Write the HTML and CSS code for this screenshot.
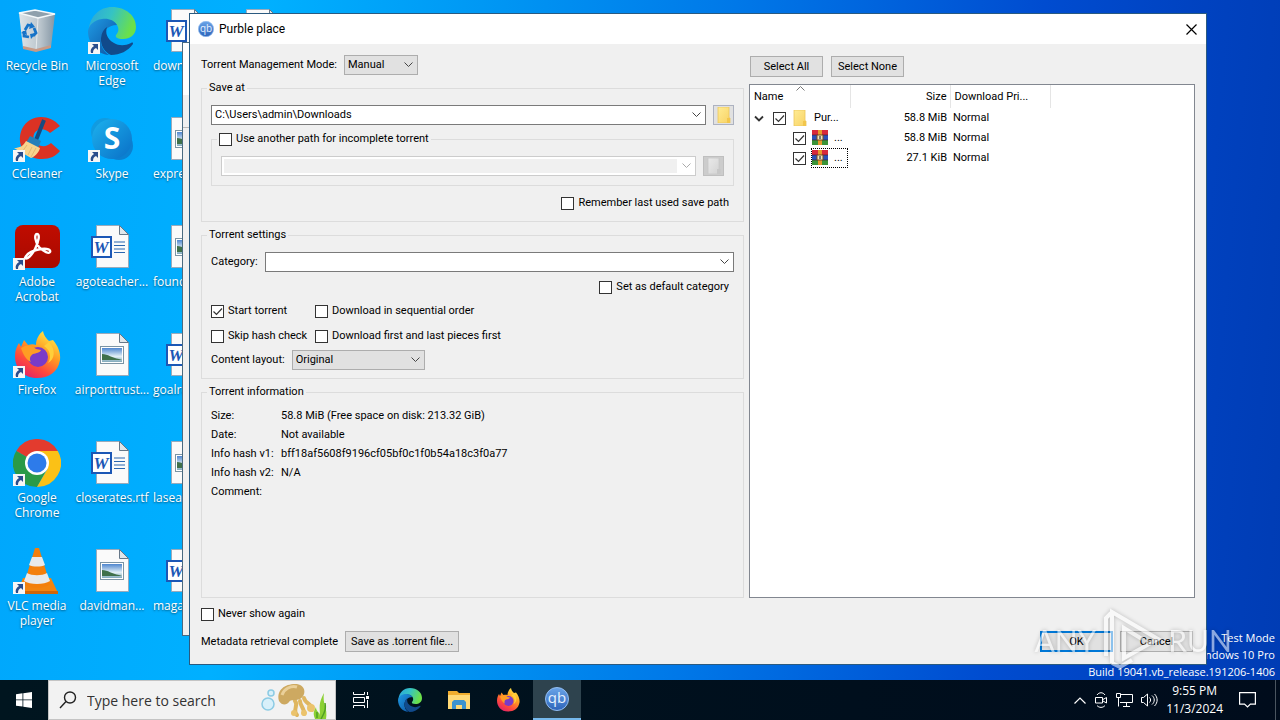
FILE: index.html
```html
<!DOCTYPE html>
<html lang="en">
<head>
<meta charset="utf-8">
<title>Purble place</title>
<link rel="stylesheet" href="styles.css">
</head>
<body>

<!-- shared icons -->
<svg class="sprite" aria-hidden="true">
  <defs>
    <linearGradient id="edge-top" x1="0" y1="0" x2="1" y2="0.3">
      <stop offset="0" stop-color="#2aa5dd"/><stop offset="0.5" stop-color="#35c3c4"/><stop offset="1" stop-color="#6be04a"/>
    </linearGradient>
    <linearGradient id="edge-low" x1="0" y1="0" x2="1" y2="1">
      <stop offset="0" stop-color="#1f9be4"/><stop offset="1" stop-color="#0c50a0"/>
    </linearGradient>
    <linearGradient id="fox" x1="0.8" y1="0" x2="0.2" y2="1">
      <stop offset="0" stop-color="#fff04a"/><stop offset="0.4" stop-color="#ff9a22"/><stop offset="0.7" stop-color="#ff4a3c"/><stop offset="1" stop-color="#e01e6c"/>
    </linearGradient>
    <linearGradient id="bin" x1="0" y1="0" x2="1" y2="0">
      <stop offset="0" stop-color="#dde4e8"/><stop offset="0.6" stop-color="#b9c4cc"/><stop offset="1" stop-color="#8496a4"/>
    </linearGradient>
    <linearGradient id="skype" x1="0" y1="0" x2="1" y2="1">
      <stop offset="0" stop-color="#1cb2ee"/><stop offset="1" stop-color="#0a6fc6"/>
    </linearGradient>
    <linearGradient id="photo" x1="0" y1="0" x2="0" y2="1">
      <stop offset="0" stop-color="#4f86cf"/><stop offset="0.6" stop-color="#e2f0f6"/><stop offset="1" stop-color="#7fa8ba"/>
    </linearGradient>
    <linearGradient id="qb" x1="0" y1="0" x2="0" y2="1">
      <stop offset="0" stop-color="#6aa4e8"/><stop offset="1" stop-color="#2d64ba"/>
    </linearGradient>
    <linearGradient id="folder" x1="0" y1="0" x2="1" y2="1">
      <stop offset="0" stop-color="#ffec94"/><stop offset="1" stop-color="#f8d264"/>
    </linearGradient>
    <linearGradient id="acrobat" x1="0" y1="0" x2="0" y2="1">
      <stop offset="0" stop-color="#c00c00"/><stop offset="1" stop-color="#a80a00"/>
    </linearGradient>
  </defs>

  <symbol id="i-shortcut" viewBox="0 0 12 12">
    <path d="M0 0h12v12H0z" fill="#f6f6f6"/>
    <path d="M4 2h6v6L8 6C6 7 5 8 5 11H3C2 8 3 6 6 4z" fill="#2a4d8c"/>
  </symbol>
  <symbol id="i-recycle" viewBox="0 0 48 48">
    <path d="M6 6l16-3 20 4-4 33-15 4-13-3z" fill="url(#bin)"/>
    <path d="M6 6l16-3 20 4-17 4z" fill="#8fa0ac" stroke="#f4f8fa" stroke-width="1.5"/>
    <path d="M25 11l-2 33" stroke="#fff" stroke-opacity=".6" fill="none"/>
    <path d="M10 39l13 3 15-4v3l-15 4-13-3z" fill="#c79a86"/>
    <path d="M12 23l3-5 5 1M21 21l2 5-3 3M16 30l-5-1v-5" fill="none" stroke="#1673c8" stroke-width="2.800"/>
    <path d="M18 15l4 5-6 2zM23 26l-5 6-1-5zM8 26l5-3 1 5z" fill="#1673c8"/>
  </symbol>
  <symbol id="i-edge" viewBox="0 0 48 48">
    <path d="M1 22C2 9 12 0 24 0c14 0 24 9 24 20 0 8-6 12-13 12-6 0-8-2-7-4 3-3 3-7 1-10C24 10 8 12 1 22z" fill="url(#edge-top)"/>
    <path d="M29 18c-3-5-9-7-15-6C6 13 1 18 0 24c0 13 9 23 21 24-6-4-8-9-8-15 0-8 7-15 16-15z" fill="url(#edge-low)"/>
    <path d="M19 20c-9 6-8 23 4 28 9 0 17-4 22-11 0-1 0-2-2-1-6 3-12 3-17 0-7-4-9-10-7-16z" fill="#114a8b"/>
  </symbol>
  <symbol id="i-ccleaner" viewBox="0 0 48 48">
    <path d="M47 11C36-2 16-1 9 14c-7 16 4 30 20 30 8 0 14-3 18-8l-9-8c-5 5-14 4-17-3-3-9 8-15 16-7z" fill="#db3224"/>
    <path d="M31 5l-8 20" stroke="#174b80" stroke-width="4"/>
    <path d="M17 21l11 5-3 7-12-5z" fill="#277fb9"/>
    <path d="M13 26l14 7c-1 5-6 9-9 10L1 33c6 0 9-2 12-7z" fill="#f8d38e"/>
    <path d="M14 30l-5 7M19 32l-4 8M23 33l-5 9" stroke="#e5b970"/>
  </symbol>
  <symbol id="i-skype" viewBox="0 0 48 48">
    <circle cx="17" cy="17" r="14" fill="#119be0"/>
    <circle cx="31" cy="31" r="14" fill="#0b80d0"/>
    <circle cx="24" cy="24" r="20" fill="url(#skype)"/>
  </symbol>
  <symbol id="i-acrobat" viewBox="0 0 48 48">
    <rect x="2" y="2" width="45" height="43" rx="8" fill="url(#acrobat)"/>
    <path d="M12 35c2-5 9-8 16-9 7-1 10 1 9 3s-6 0-11-5c-4-5-5-13-2-13s2 7-2 15c-3 6-8 11-10 9z" fill="none" stroke="#fff" stroke-width="2.400"/>
  </symbol>
  <symbol id="i-firefox" viewBox="0 0 48 48">
    <path d="M30 0c1 5 3 7 6 10l4-1c5 6 8 13 7 20-2 12-11 18-23 18C10 47 2 37 2 25c0-6 2-10 4-13l2 4 3-7 4 5c3-1 6-1 8 0 0-6 3-11 7-14z" fill="url(#fox)"/>
    <circle cx="25" cy="26" r="10" fill="#7a3bc8"/>
    <path d="M8 17c6-4 11-3 15 1l5 1c-1 3-5 3-8 4-3 2-4 5-2 8-5-2-8-8-10-14z" fill="#ff9d23"/>
    <path d="M31 15c6 4 8 11 4 17 7-4 8-13 1-21z" fill="#ffcf3a"/>
  </symbol>
  <symbol id="i-chrome" viewBox="0 0 48 48">
    <path d="M24 24L3.200 12a24 24 0 0 1 41.600 0z" fill="#e33b2e"/>
    <path d="M3.200 12a24 24 0 0 0 20.800 36l10-18-10-6z" fill="#2a9a48"/>
    <path d="M44.800 12a24 24 0 0 1-20.800 36l10.400-18L24 12z" fill="#fbc116"/>
    <circle cx="24" cy="24" r="12" fill="#fff"/>
    <circle cx="24" cy="24" r="9.500" fill="#2d7bea"/>
  </symbol>
  <symbol id="i-vlc" viewBox="0 0 48 48">
    <path d="M10 31h28l7 15H4z" fill="#f28410"/>
    <path d="M4 44h41v3H4z" fill="#cf6608"/>
    <path d="M22 1h4l11 36c-5 5-21 5-26 0z" fill="#f37f0c"/>
    <path d="M19 10h10l3 8c-4 2-12 2-16 0zM14 26c5 3 15 3 20 0l3 8c-6 4-20 4-26 0z" fill="#e9e9e9"/>
  </symbol>
  <symbol id="i-page" viewBox="0 0 48 48">
    <path d="M8.500 2.500h23l9 9v33h-32z" fill="#fafafa" stroke="#9ab"/>
    <path d="M31.500 2.500v9h9z" fill="#dfe6ea" stroke="#678"/>
  </symbol>
  <symbol id="i-word" viewBox="0 0 48 48">
    <use href="#i-page"/>
    <path d="M26 19h11M26 22.500h11M26 26h11M26 29.500h11" stroke="#2b66b0" stroke-width="1.200"/>
    <rect x="4" y="14" width="19" height="20" fill="#fff" stroke="#1c57b5" stroke-width="2"/>
  </symbol>
  <symbol id="i-image" viewBox="0 0 48 48">
    <use href="#i-page"/>
    <rect x="12.500" y="15.500" width="23" height="17" fill="#fff" stroke="#7b94a4"/>
    <path d="M14 17h20v14H14z" fill="url(#photo)"/>
    <path d="M14 23c6 0 10 4 17 5l3 1H14z" fill="#3f704a"/>
  </symbol>
  <symbol id="i-folder" viewBox="0 0 16 16">
    <path d="M2 0h11v11h1v5H2z" fill="url(#folder)" stroke="#ecc65c" stroke-width=".8"/>
    <path d="M11 11h3v5h-3z" fill="#f2c64c"/>
  </symbol>
  <symbol id="i-rar" viewBox="0 0 16 16">
    <path d="M0 0h16v5H0z" fill="#d8283c"/>
    <path d="M0 5h16v5H0z" fill="#2c50b8"/>
    <path d="M0 10h16v5H0z" fill="#3a9438"/>
    <path d="M0 5h16M0 10h16" stroke="#3a1830" stroke-width=".6"/>
    <path d="M6 0h4v15H6z" fill="#e79a2c"/>
    <path d="M5 5h6v5H5z" fill="#efe5c0" stroke="#7a4a20"/>
    <path d="M8 6v3" stroke="#555" stroke-width="1.500"/>
  </symbol>
</svg>

<main class="desktop">
  <div class="desktop-icons">
    <a class="shortcut" href="#"><svg class="icon"><use href="#i-recycle"/></svg><span>Recycle Bin</span></a>
    <a class="shortcut" href="#"><svg class="icon"><use href="#i-ccleaner"/><use href="#i-shortcut" y="35" width="12" height="12"/></svg><span>CCleaner</span></a>
    <a class="shortcut" href="#"><svg class="icon"><use href="#i-acrobat"/><use href="#i-shortcut" y="35" width="12" height="12"/></svg><span>Adobe Acrobat</span></a>
    <a class="shortcut" href="#"><svg class="icon"><use href="#i-firefox"/><use href="#i-shortcut" y="35" width="12" height="12"/></svg><span>Firefox</span></a>
    <a class="shortcut" href="#"><svg class="icon"><use href="#i-chrome"/><use href="#i-shortcut" y="35" width="12" height="12"/></svg><span>Google Chrome</span></a>
    <a class="shortcut" href="#"><svg class="icon"><use href="#i-vlc"/><use href="#i-shortcut" y="35" width="12" height="12"/></svg><span>VLC media player</span></a>

    <a class="shortcut" href="#"><svg class="icon"><use href="#i-edge"/><use href="#i-shortcut" y="35" width="12" height="12"/></svg><span>Microsoft Edge</span></a>
    <a class="shortcut" href="#"><svg class="icon"><use href="#i-skype"/><text x="24" y="34" text-anchor="middle" class="skype-s">S</text><use href="#i-shortcut" y="35" width="12" height="12"/></svg><span>Skype</span></a>
    <a class="shortcut" href="#"><svg class="icon"><use href="#i-word"/><text x="13" y="30" text-anchor="middle" class="word-w">W</text></svg><span>agoteacher...</span></a>
    <a class="shortcut" href="#"><svg class="icon"><use href="#i-image"/></svg><span>airporttrust...</span></a>
    <a class="shortcut" href="#"><svg class="icon"><use href="#i-word"/><text x="13" y="30" text-anchor="middle" class="word-w">W</text></svg><span>closerates.rtf</span></a>
    <a class="shortcut" href="#"><svg class="icon"><use href="#i-image"/></svg><span>davidman...</span></a>

    <a class="shortcut cut" href="#"><svg class="icon"><use href="#i-word"/><text x="13" y="30" text-anchor="middle" class="word-w">W</text></svg><span>down</span></a>
    <a class="shortcut cut" href="#"><svg class="icon"><use href="#i-image"/></svg><span>expre</span></a>
    <a class="shortcut cut" href="#"><svg class="icon"><use href="#i-image"/></svg><span>found</span></a>
    <a class="shortcut cut" href="#"><svg class="icon"><use href="#i-word"/><text x="13" y="30" text-anchor="middle" class="word-w">W</text></svg><span>goalre</span></a>
    <a class="shortcut cut" href="#"><svg class="icon"><use href="#i-image"/></svg><span>lasea</span></a>
    <a class="shortcut cut" href="#"><svg class="icon"><use href="#i-word"/><text x="13" y="30" text-anchor="middle" class="word-w">W</text></svg><span>maga</span></a>

    <a class="shortcut" href="#" aria-label="Document"><svg class="icon"><use href="#i-page"/></svg></a>
  </div>

  <p class="build">Test Mode<br>Windows 10 Pro<br>Build 19041.vb_release.191206-1406</p>

  <div class="back-window"><div class="back-title"></div><div class="back-tools"></div></div>

  <form class="dialog">
    <header class="titlebar">
      <svg width="16" height="16" viewBox="0 0 24 24"><circle cx="12" cy="12" r="11.500" fill="url(#qb)" stroke="#93bdf0"/><text x="12" y="16" text-anchor="middle" class="qb-text">qb</text></svg>
      <h1>Purble place</h1>
      <button type="button" class="close" aria-label="Close">
        <svg width="11" height="11" viewBox="0 0 11 11"><path d="M.5.5l10 10M10.500.5l-10 10" stroke="#000" stroke-width="1.200"/></svg>
      </button>
    </header>

    <div class="panes">
      <section class="options">
        <div class="row mode-row">
          <label for="mode">Torrent Management Mode:</label>
          <select id="mode" class="drop mode"><option>Manual</option></select>
        </div>

        <fieldset class="group">
          <legend>Save at</legend>
          <div class="row">
            <select class="drop editable grow" aria-label="Save path"><option>C:\Users\admin\Downloads</option></select>
            <button type="button" class="browse" aria-label="Browse"><svg width="16" height="16"><use href="#i-folder"/></svg></button>
          </div>
          <fieldset class="group inner">
            <legend><label class="check"><input type="checkbox">Use another path for incomplete torrent</label></legend>
            <div class="row">
              <select class="drop editable grow" aria-label="Incomplete path" disabled><option></option></select>
              <button type="button" class="browse" aria-label="Browse incomplete path" disabled><svg width="16" height="16"><use href="#i-folder"/></svg></button>
            </div>
          </fieldset>
          <label class="check push remember"><input type="checkbox">Remember last used save path</label>
        </fieldset>

        <fieldset class="group">
          <legend>Torrent settings</legend>
          <div class="row">
            <label for="category">Category:</label>
            <select id="category" class="drop editable grow"><option></option></select>
          </div>
          <label class="check push default"><input type="checkbox">Set as default category</label>
          <div class="checks">
            <label class="check"><input type="checkbox" checked>Start torrent</label>
            <label class="check"><input type="checkbox">Download in sequential order</label>
            <label class="check"><input type="checkbox">Skip hash check</label>
            <label class="check"><input type="checkbox">Download first and last pieces first</label>
          </div>
          <div class="row">
            <label for="layout">Content layout:</label>
            <select id="layout" class="drop layout"><option>Original</option></select>
          </div>
        </fieldset>

        <fieldset class="group info">
          <legend>Torrent information</legend>
          <dl>
            <dt>Size:</dt><dd>58.8 MiB (Free space on disk: 213.32 GiB)</dd>
            <dt>Date:</dt><dd>Not available</dd>
            <dt>Info hash v1:</dt><dd>bff18af5608f9196cf05bf0c1f0b54a18c3f0a77</dd>
            <dt>Info hash v2:</dt><dd>N/A</dd>
            <dt>Comment:</dt><dd></dd>
          </dl>
        </fieldset>
      </section>

      <section class="files">
        <div class="row file-buttons">
          <button type="button" class="btn">Select All</button>
          <button type="button" class="btn">Select None</button>
        </div>
        <div class="tree">
          <table>
            <thead>
              <tr>
                <th class="col-name">Name<svg class="sort" width="9" height="5" viewBox="0 0 9 5"><path d="M.5 4.500l4-4 4 4" fill="none" stroke="#777"/></svg></th>
                <th class="col-size">Size</th>
                <th class="col-priority">Download Pri...</th>
                <th></th>
              </tr>
            </thead>
            <tbody>
              <tr>
                <td><div class="file">
                  <svg width="10" height="7" viewBox="0 0 10 7"><path d="M1 1.500l4 4 4-4" fill="none" stroke="#333" stroke-width="1.800"/></svg>
                  <input type="checkbox" aria-label="Folder" checked>
                  <span class="file-name"><svg width="16" height="16"><use href="#i-folder"/></svg>Pur...</span>
                </div></td>
                <td class="size">58.8 MiB</td>
                <td>Normal</td>
                <td></td>
              </tr>
              <tr>
                <td><div class="file child">
                  <input type="checkbox" aria-label="First file" checked>
                  <span class="file-name"><svg width="16" height="16"><use href="#i-rar"/></svg>...</span>
                </div></td>
                <td class="size">58.8 MiB</td>
                <td>Normal</td>
                <td></td>
              </tr>
              <tr>
                <td><div class="file child">
                  <input type="checkbox" aria-label="Second file" checked>
                  <span class="file-name focused"><svg width="16" height="16"><use href="#i-rar"/></svg>...</span>
                </div></td>
                <td class="size">27.1 KiB</td>
                <td>Normal</td>
                <td></td>
              </tr>
            </tbody>
          </table>
        </div>
      </section>
    </div>

    <footer class="footer">
      <label class="check"><input type="checkbox">Never show again</label>
      <div class="row">
        <span>Metadata retrieval complete</span>
        <button type="button" class="btn save">Save as .torrent file...</button>
        <button type="button" class="btn ok">OK</button>
        <button type="button" class="btn">Cancel</button>
      </div>
    </footer>
  </form>

  <div class="watermark">
    <span>ANY</span>
    <svg width="60" height="64" viewBox="0 0 60 64"><path d="M4 48V10l5-5M10 55V4l46 27-34 19V20l18 11M10 55l8 4 12-7" fill="none" stroke="#fff" stroke-width="4"/></svg>
    <span>RUN</span>
  </div>
</main>

<nav class="taskbar">
  <button class="task start" aria-label="Start">
    <svg width="16" height="16" viewBox="0 0 16 16" fill="#fff"><path d="M0 2.200l6.500-.9v6.200H0zM7.300 1.200L16 0v7.500H7.300zM0 8.300h6.500v6.300L0 13.700zM7.300 8.300H16V16l-8.700-1.200z"/></svg>
  </button>
  <div class="search">
    <svg width="18" height="18" viewBox="0 0 18 18" fill="none" stroke="#222" stroke-width="1.400"><circle cx="11" cy="6.500" r="5.500"/><path d="M7 10.500L1 17"/></svg>
    <input type="text" placeholder="Type here to search" aria-label="Search">
    <svg width="74" height="38" viewBox="0 0 74 38">
      <circle cx="7" cy="23" r="6" fill="#d8f0fa" stroke="#8ccbe4" stroke-width="1.500"/>
      <circle cx="10" cy="12" r="3" fill="#d8f0fa" stroke="#8ccbe4" stroke-width="1.500"/>
      <g fill="none" stroke="#dfb660" stroke-width="4" stroke-linecap="round">
        <path d="M34 20c4 4-3 9 2 14M39 20c0 5 5 8 4 13M43 17c1 6 9 6 8 12"/>
      </g>
      <g fill="#ebc36c"><circle cx="33" cy="32" r="3"/><circle cx="43" cy="32" r="3"/><circle cx="50" cy="27" r="4"/></g>
      <path d="M18 20C15 9 24 3 34 3c11 0 12 11 5 15-5 2-9 0-11 3s-7 4-10-1z" fill="#cda961"/>
      <path d="M21 14c2-6 9-10 15-8" fill="none" stroke="#ead09a" stroke-width="3"/>
      <path d="M54 38c-3-7 0-9 1-12 0 5 4 5 4 9 0-9-2-12 4-23-2 11 4 15 2 26z" fill="#8bd034"/>
      <path d="M60 38c4-7 5-10 4-16M56 37v-6" fill="none" stroke="#4f9f24" stroke-width="1.500"/>
    </svg>
  </div>
  <button class="task" aria-label="Task View">
    <svg width="17" height="16" viewBox="0 0 17 16" fill="none" stroke="#fff"><path d="M.5 0v2.500h11V0M.5 16v-2.500h11V16M.5 5.500h11v5H.5zM14.500 0v3M14.500 8v8"/><path d="M13 4h3v3h-3z" fill="#fff" stroke="none"/></svg>
  </button>
  <button class="task" aria-label="Microsoft Edge"><svg width="24" height="24"><use href="#i-edge"/></svg></button>
  <button class="task" aria-label="File Explorer">
    <svg width="22" height="20" viewBox="0 0 22 20"><path d="M0 1h9l2 2h11v16H0z" fill="#f0ad2e"/><path d="M0 5h22v14H0z" fill="#ffd976"/><path d="M4 19v-7l2-2h10l2 2v7h-4v-4H8v4z" fill="#3c93cf"/></svg>
  </button>
  <button class="task" aria-label="Firefox"><svg width="24" height="24"><use href="#i-firefox"/></svg></button>
  <button class="task active" aria-label="qBittorrent">
    <svg width="24" height="24" viewBox="0 0 24 24"><circle cx="12" cy="12" r="11.500" fill="url(#qb)" stroke="#93bdf0"/><text x="12" y="16" text-anchor="middle" class="qb-text">qb</text></svg>
  </button>

  <div class="tray">
    <button aria-label="Show hidden icons"><svg width="12" height="7" viewBox="0 0 12 7" fill="none" stroke="#fff" stroke-width="1.200"><path d="M.5 6.500l5.500-5.500 5.500 5.500"/></svg></button>
    <button aria-label="Meet Now"><svg width="14" height="16" viewBox="0 0 14 16" fill="none" stroke="#fff"><path d="M1.500 5.500h7v5.500h-7zM9 7.500l3.500-2v5.500L9 9M3 3c2-3 6-3 8 0M3 13.500c2 2.500 6 2.500 8 0"/></svg></button>
    <button aria-label="Network"><svg width="17" height="14" viewBox="0 0 17 14" fill="none" stroke="#fff"><path d="M5 1.500h11.500v8H4M10.500 9.500v4M7 13.500h7M.5.5h4v4h-4zM2.500 4.500v9"/></svg></button>
    <button aria-label="Volume"><svg width="17" height="14" viewBox="0 0 17 14" fill="none" stroke="#fff"><path d="M.5 4.500h2l4-3.500v12l-4-3.500h-2zM8.500 4.500c1.500 1.500 1.500 3.500 0 5M11 2.500c3 2.500 3 6.500 0 9M13.500 1c3.500 3.500 3.500 8.500 0 12"/></svg></button>
    <time class="clock">9:55 PM<br>11/3/2024</time>
    <button class="notify" aria-label="Notifications"><svg width="17" height="16" viewBox="0 0 17 16" fill="none" stroke="#fff" stroke-width="1.200"><path d="M.6.6h15.800v11.500h-5L8.500 15l-3-2.900H.6z"/></svg></button>
  </div>
</nav>

</body>
</html>
```
FILE: styles.css
```css
* {
  box-sizing: border-box;
}

body {
  color: #000;
  display: flex;
  flex-direction: column;
  font-family: "Open Sans", "Noto Sans", sans-serif;
  font-size: 11px;
  height: 100vh;
  line-height: 14px;
  margin: 0;
  overflow: hidden;
}

button,
input,
select {
  color: inherit;
  font: inherit;
  margin: 0;
}

.sprite {
  height: 0;
  position: absolute;
  width: 0;
}

/* desktop */

.desktop {
  background: linear-gradient(95deg, #00a6fc 0%, #00b0ff 20%, #0098f4 36%, #0078e8 55%, #004cd0 78%, #0042c0 90%, #003cb4 100%);
  flex: 1;
  min-height: 0;
  overflow: hidden;
  position: relative;
}

.desktop-icons {
  display: grid;
  grid-auto-columns: 75px;
  grid-auto-flow: column;
  grid-template-rows: repeat(6, 108px);
}

.shortcut {
  align-items: center;
  color: #fff;
  display: flex;
  flex-direction: column;
  font-size: 12px;
  gap: 3px;
  line-height: 15px;
  padding: 7px 1px 0 0;
  text-align: center;
  text-decoration: none;
  text-shadow: 0 1px 2px rgba(0, 0, 0, 0.5);
}

.shortcut.cut span {
  align-self: stretch;
  padding-left: 3px;
  text-align: left;
}

.icon {
  flex: none;
  height: 48px;
  width: 48px;
}

.icon text {
  text-shadow: none;
}

.skype-s {
  fill: #fff;
  font: bold 30px "Open Sans", sans-serif;
}

.word-w {
  fill: #1c57b5;
  font: italic bold 17px "Liberation Serif", serif;
}

.qb-text {
  fill: #e6f1ff;
  font: 15px "Open Sans", sans-serif;
}

.build {
  bottom: 0;
  color: #fff;
  font-size: 11px;
  line-height: 17px;
  margin: 0;
  position: absolute;
  right: 5px;
  text-align: right;
}

.back-window {
  background: #f0f0f0;
  border: 1px solid #4a6a80;
  bottom: 44px;
  left: 182px;
  position: absolute;
  right: 90px;
  top: 42px;
}

.back-title {
  background: #fff;
  height: 52px;
}

.back-tools {
  border-bottom: 1px solid #b8b8b8;
  height: 33px;
}

/* dialog */

.dialog {
  background: #f0f0f0;
  border: 1px solid #2a5a80;
  bottom: 15px;
  display: flex;
  flex-direction: column;
  font-family: Roboto, "Open Sans", sans-serif;
  left: 189px;
  position: absolute;
  right: 73px;
  top: 13px;
}

.titlebar {
  align-items: center;
  background: #fff;
  display: flex;
  gap: 5px;
  height: 30px;
  padding: 0 9px 0 8px;
}

.titlebar h1 {
  flex: 1;
  font-size: 12px;
  font-weight: normal;
  margin: 0;
}

.close {
  background: none;
  border: 0;
  display: flex;
  padding: 0;
}

.panes {
  display: flex;
  flex: 1;
  gap: 5px;
  min-height: 0;
  padding: 11px 11px 0;
}

.options {
  display: flex;
  flex: 543;
  flex-direction: column;
  min-width: 0;
}

.files {
  display: flex;
  flex: 446;
  flex-direction: column;
  min-width: 0;
}

.row {
  align-items: center;
  display: flex;
  gap: 7px;
}

.mode-row {
  margin-bottom: 6px;
}

.grow {
  flex: 1;
  min-width: 0;
}

.drop {
  appearance: none;
  background: #e1e1e1 url("data:image/svg+xml,%3Csvg xmlns='http://www.w3.org/2000/svg' width='9' height='6'%3E%3Cpath d='M.5 .5l4 4 4-4' fill='none' stroke='%23444'/%3E%3C/svg%3E") no-repeat right 4px center;
  border: 1px solid #adadad;
  border-radius: 0;
  height: 20px;
  line-height: 16px;
  padding: 0 3px;
}

.mode {
  width: 74px;
}

.layout {
  width: 133px;
}

.editable {
  background-color: #fff;
  border-color: #7a7a7a;
}

.editable:disabled {
  background:
    url("data:image/svg+xml,%3Csvg xmlns='http://www.w3.org/2000/svg' width='9' height='6'%3E%3Cpath d='M.5 .5l4 4 4-4' fill='none' stroke='%23aaa'/%3E%3C/svg%3E") no-repeat right 4px center,
    linear-gradient(#fff, #fff) no-repeat right / 18px 100%,
    #f0f0f0;
  border-color: #ccc;
  opacity: 1;
  outline: 2px solid #fff;
  outline-offset: -3px;
}

.group {
  border: 1px solid #dcdcdc;
  margin: 0 0 6px;
  min-width: 0;
  padding: 10px 9px 8px;
}

.group legend {
  margin-left: -4px;
  padding: 0 2px;
}

.inner {
  margin: 7px 0 10px;
  padding-bottom: 9px;
}

.info {
  flex: 1;
  margin-bottom: 0;
  padding-top: 7px;
}

.browse {
  align-items: center;
  background: #e1e1e1;
  border: 1px solid #adb2c0;
  display: flex;
  height: 20px;
  justify-content: center;
  padding: 0;
  width: 21px;
}

.browse:disabled {
  background: #ccc;
  border-color: #bfbfbf;
}

.browse:disabled svg {
  filter: grayscale(1);
}

.check {
  align-items: center;
  display: flex;
  gap: 4px;
  white-space: nowrap;
}

.push {
  justify-content: flex-end;
  padding-right: 5px;
}

.remember {
  margin-bottom: 3px;
}

.default {
  margin: 8px 0 10px;
}

input[type="checkbox"] {
  appearance: none;
  background: #fff;
  border: 1px solid #333;
  flex: none;
  height: 13px;
  width: 13px;
}

input[type="checkbox"]:checked {
  background: #fff url("data:image/svg+xml,%3Csvg xmlns='http://www.w3.org/2000/svg' width='11' height='11'%3E%3Cpath d='M1.500 5.500l3 3 5.500-6' fill='none' stroke='%23333' stroke-width='1.200'/%3E%3C/svg%3E") no-repeat center;
}

.checks {
  display: grid;
  gap: 11px;
  grid-template-columns: 93px 1fr;
  margin-bottom: 7px;
}

dl {
  display: grid;
  grid-template-columns: 70px 1fr;
  line-height: 19px;
  margin: 0;
}

dd {
  margin: 0;
}

.file-buttons {
  gap: 8px;
  margin: 1px 0 7px 1px;
}

.btn {
  background: #e1e1e1;
  border: 1px solid #adadad;
  height: 21px;
  padding: 0 2px;
  width: 73px;
  white-space: nowrap;
}

.tree {
  background: #fff;
  border: 1px solid #828790;
  flex: 1;
  min-height: 0;
  overflow: auto;
}

table {
  border-collapse: collapse;
  table-layout: fixed;
  width: 100%;
}

th {
  border-right: 1px solid #e5e5e5;
  font-weight: normal;
  height: 23px;
  padding: 0 3px 0 4px;
  position: relative;
  text-align: left;
}

th:last-child {
  border-right: 0;
}

.col-name,
.col-size,
.col-priority {
  width: 100px;
}

.col-size {
  text-align: right;
}

.sort {
  left: 46px;
  position: absolute;
  top: 1px;
}

td {
  height: 20px;
  padding: 0 3px;
}

.size {
  text-align: right;
}

.file {
  align-items: center;
  display: flex;
  gap: 9px;
  padding-left: 1px;
}

.child {
  gap: 5px;
  padding-left: 40px;
}

.file-name {
  align-items: center;
  border: 1px dotted transparent;
  display: flex;
  gap: 6px;
  height: 20px;
  margin-left: -4px;
}

.child .file-name {
  margin-left: 0;
  padding-right: 4px;
}

.focused {
  border-color: #000;
}

.footer {
  padding: 9px 13px 12px 11px;
}

.footer .row {
  margin-top: 10px;
}

.footer .save {
  margin-right: auto;
  width: 114px;
}

.footer .ok {
  border: 2px solid #0078d7;
}

.watermark {
  align-items: center;
  bottom: 8px;
  color: #fff;
  display: flex;
  filter: drop-shadow(0 0 2px rgba(0, 0, 0, 0.4));
  font: 30px "Lato", sans-serif;
  gap: 6px;
  opacity: 0.55;
  pointer-events: none;
  position: absolute;
  right: 48px;
}

/* taskbar */

.taskbar {
  background: linear-gradient(90deg, #00151f, #000c1c);
  display: flex;
  flex: none;
  height: 40px;
}

.task,
.tray button {
  align-items: center;
  background: none;
  border: 0;
  display: flex;
  justify-content: center;
  padding: 0;
}

.task {
  margin-right: 1px;
  width: 48px;
}

.start {
  margin-right: 0;
}

.active {
  background: #2e434e;
  border-bottom: 2px solid #76b9ed;
}

.search {
  align-items: center;
  background: #f2f2f2;
  border: 1px solid #c4c4c4;
  display: flex;
  gap: 10px;
  margin-right: 1px;
  padding-left: 10px;
  width: 288px;
}

.search svg {
  flex: none;
}

.search input {
  background: none;
  border: 0;
  flex: 1;
  font-size: 14px;
  min-width: 0;
  padding: 0;
}

.search input::placeholder {
  color: #333;
}

.tray {
  align-items: center;
  color: #fff;
  display: flex;
  gap: 8px;
  margin-left: auto;
  padding-right: 4px;
}

.clock {
  font-size: 12px;
  line-height: 18px;
  text-align: center;
}

.tray .notify {
  border-right: 1px solid #4a5560;
  height: 40px;
  padding: 0 19px 0 8px;
}
```
